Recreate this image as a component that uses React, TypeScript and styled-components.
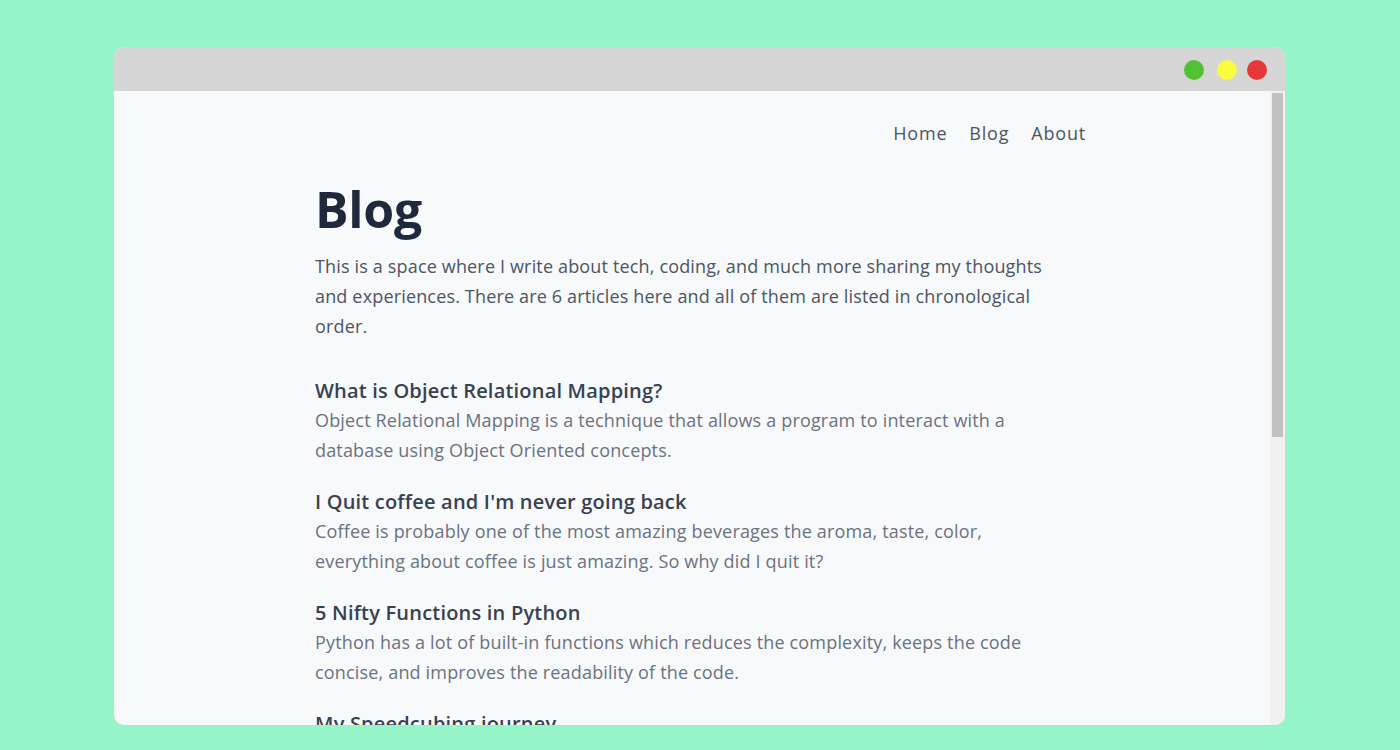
import React from "react";
import styled, { createGlobalStyle } from "styled-components";

const Global = createGlobalStyle`
  html, body { margin: 0; padding: 0; }
  body {
    background: #96f5c8;
    font-family: "Open Sans", "Noto Sans", sans-serif;
  }
`;

const Page = styled.div`
  width: 1400px;
  height: 750px;
  box-sizing: border-box;
  padding: 47px 115px 25px 114px;
  display: flex;
  flex-direction: column;
`;

const Window = styled.div`
  flex: 1;
  display: flex;
  flex-direction: column;
  border-radius: 10px;
  overflow: hidden;
  background: #f8f9fb;
`;

const TitleBar = styled.div`
  height: 44px;
  box-sizing: border-box;
  padding: 2px 18px 0 0;
  flex: none;
  background: #d6d6d6;
  display: flex;
  align-items: center;
  justify-content: flex-end;
  gap: 10px;
`;

const Dot = styled.span<{ $color: string; $gap?: number }>`
  width: 20px;
  height: 20px;
  border-radius: 50%;
  background: ${(p) => p.$color};
  margin-right: ${(p) => p.$gap ?? 0}px;
`;

const Body = styled.div`
  flex: 1;
  display: flex;
  min-height: 0;
`;

const Viewport = styled.div`
  flex: 1;
  overflow: hidden;
  padding: 0 184px 0 201px;
`;

const Scrollbar = styled.div`
  width: 15px;
  flex: none;
  background: #f1f1f1;
  padding: 2px 2px 0 2px;
  box-sizing: border-box;
`;

const Thumb = styled.div`
  height: 344px;
  background: #c1c1c1;
`;

const Nav = styled.nav`
  display: flex;
  justify-content: flex-end;
  gap: 22px;
  padding-top: 27px;
`;

const NavLink = styled.a`
  font-size: 18px;
  line-height: 30px;
  letter-spacing: 0.8px;
  color: #4b5563;
  text-decoration: none;
`;

const Heading = styled.h1`
  margin: 26px 0 0 0;
  font-size: 50px;
  line-height: 70px;
  font-weight: 700;
  color: #1e293b;
  letter-spacing: -0.3px;
`;

const Intro = styled.p`
  margin: 7px 0 0 0;
  max-width: 745px;
  font-size: 18px;
  line-height: 30px;
  letter-spacing: 0.16px;
  color: #4b5563;
`;

const List = styled.div`
  margin-top: 35px;
  display: flex;
  flex-direction: column;
  gap: 22px;
`;

const Article = styled.article`
  display: flex;
  flex-direction: column;
  max-width: 745px;
`;

const ArticleTitle = styled.h2`
  margin: 0;
  font-size: 20px;
  line-height: 30px;
  font-weight: 600;
  letter-spacing: 0.2px;
  color: #374151;
`;

const ArticleDesc = styled.p`
  margin: -1px 0 0 0;
  font-size: 18px;
  line-height: 30px;
  letter-spacing: 0.17px;
  color: #6b7280;
`;

const articles = [
  {
    title: "What is Object Relational Mapping?",
    desc: "Object Relational Mapping is a technique that allows a program to interact with a database using Object Oriented concepts.",
  },
  {
    title: "I Quit coffee and I'm never going back",
    desc: "Coffee is probably one of the most amazing beverages the aroma, taste, color, everything about coffee is just amazing. So why did I quit it?",
  },
  {
    title: "5 Nifty Functions in Python",
    desc: "Python has a lot of built-in functions which reduces the complexity, keeps the code concise, and improves the readability of the code.",
  },
  {
    title: "My Speedcubing journey",
    desc: "How I got into solving the Rubik's cube and what I learned along the way.",
  },
  {
    title: "Getting started with Git",
    desc: "A beginner friendly introduction to version control with Git.",
  },
  {
    title: "Hello World",
    desc: "The very first post on this blog.",
  },
];

export default function App() {
  return (
    <>
      <Global />
      <Page>
        <Window>
          <TitleBar>
            <Dot $color="#52c234" $gap={3} />
            <Dot $color="#fcfc3f" />
            <Dot $color="#e53838" />
          </TitleBar>
          <Body>
            <Viewport>
              <Nav>
                <NavLink href="#">Home</NavLink>
                <NavLink href="#">Blog</NavLink>
                <NavLink href="#">About</NavLink>
              </Nav>
              <Heading>Blog</Heading>
              <Intro>
                This is a space where I write about tech, coding, and much more
                sharing my thoughts and experiences. There are 6 articles here
                and all of them are listed in chronological order.
              </Intro>
              <List>
                {articles.map((a) => (
                  <Article key={a.title}>
                    <ArticleTitle>{a.title}</ArticleTitle>
                    <ArticleDesc>{a.desc}</ArticleDesc>
                  </Article>
                ))}
              </List>
            </Viewport>
            <Scrollbar>
              <Thumb />
            </Scrollbar>
          </Body>
        </Window>
      </Page>
    </>
  );
}
